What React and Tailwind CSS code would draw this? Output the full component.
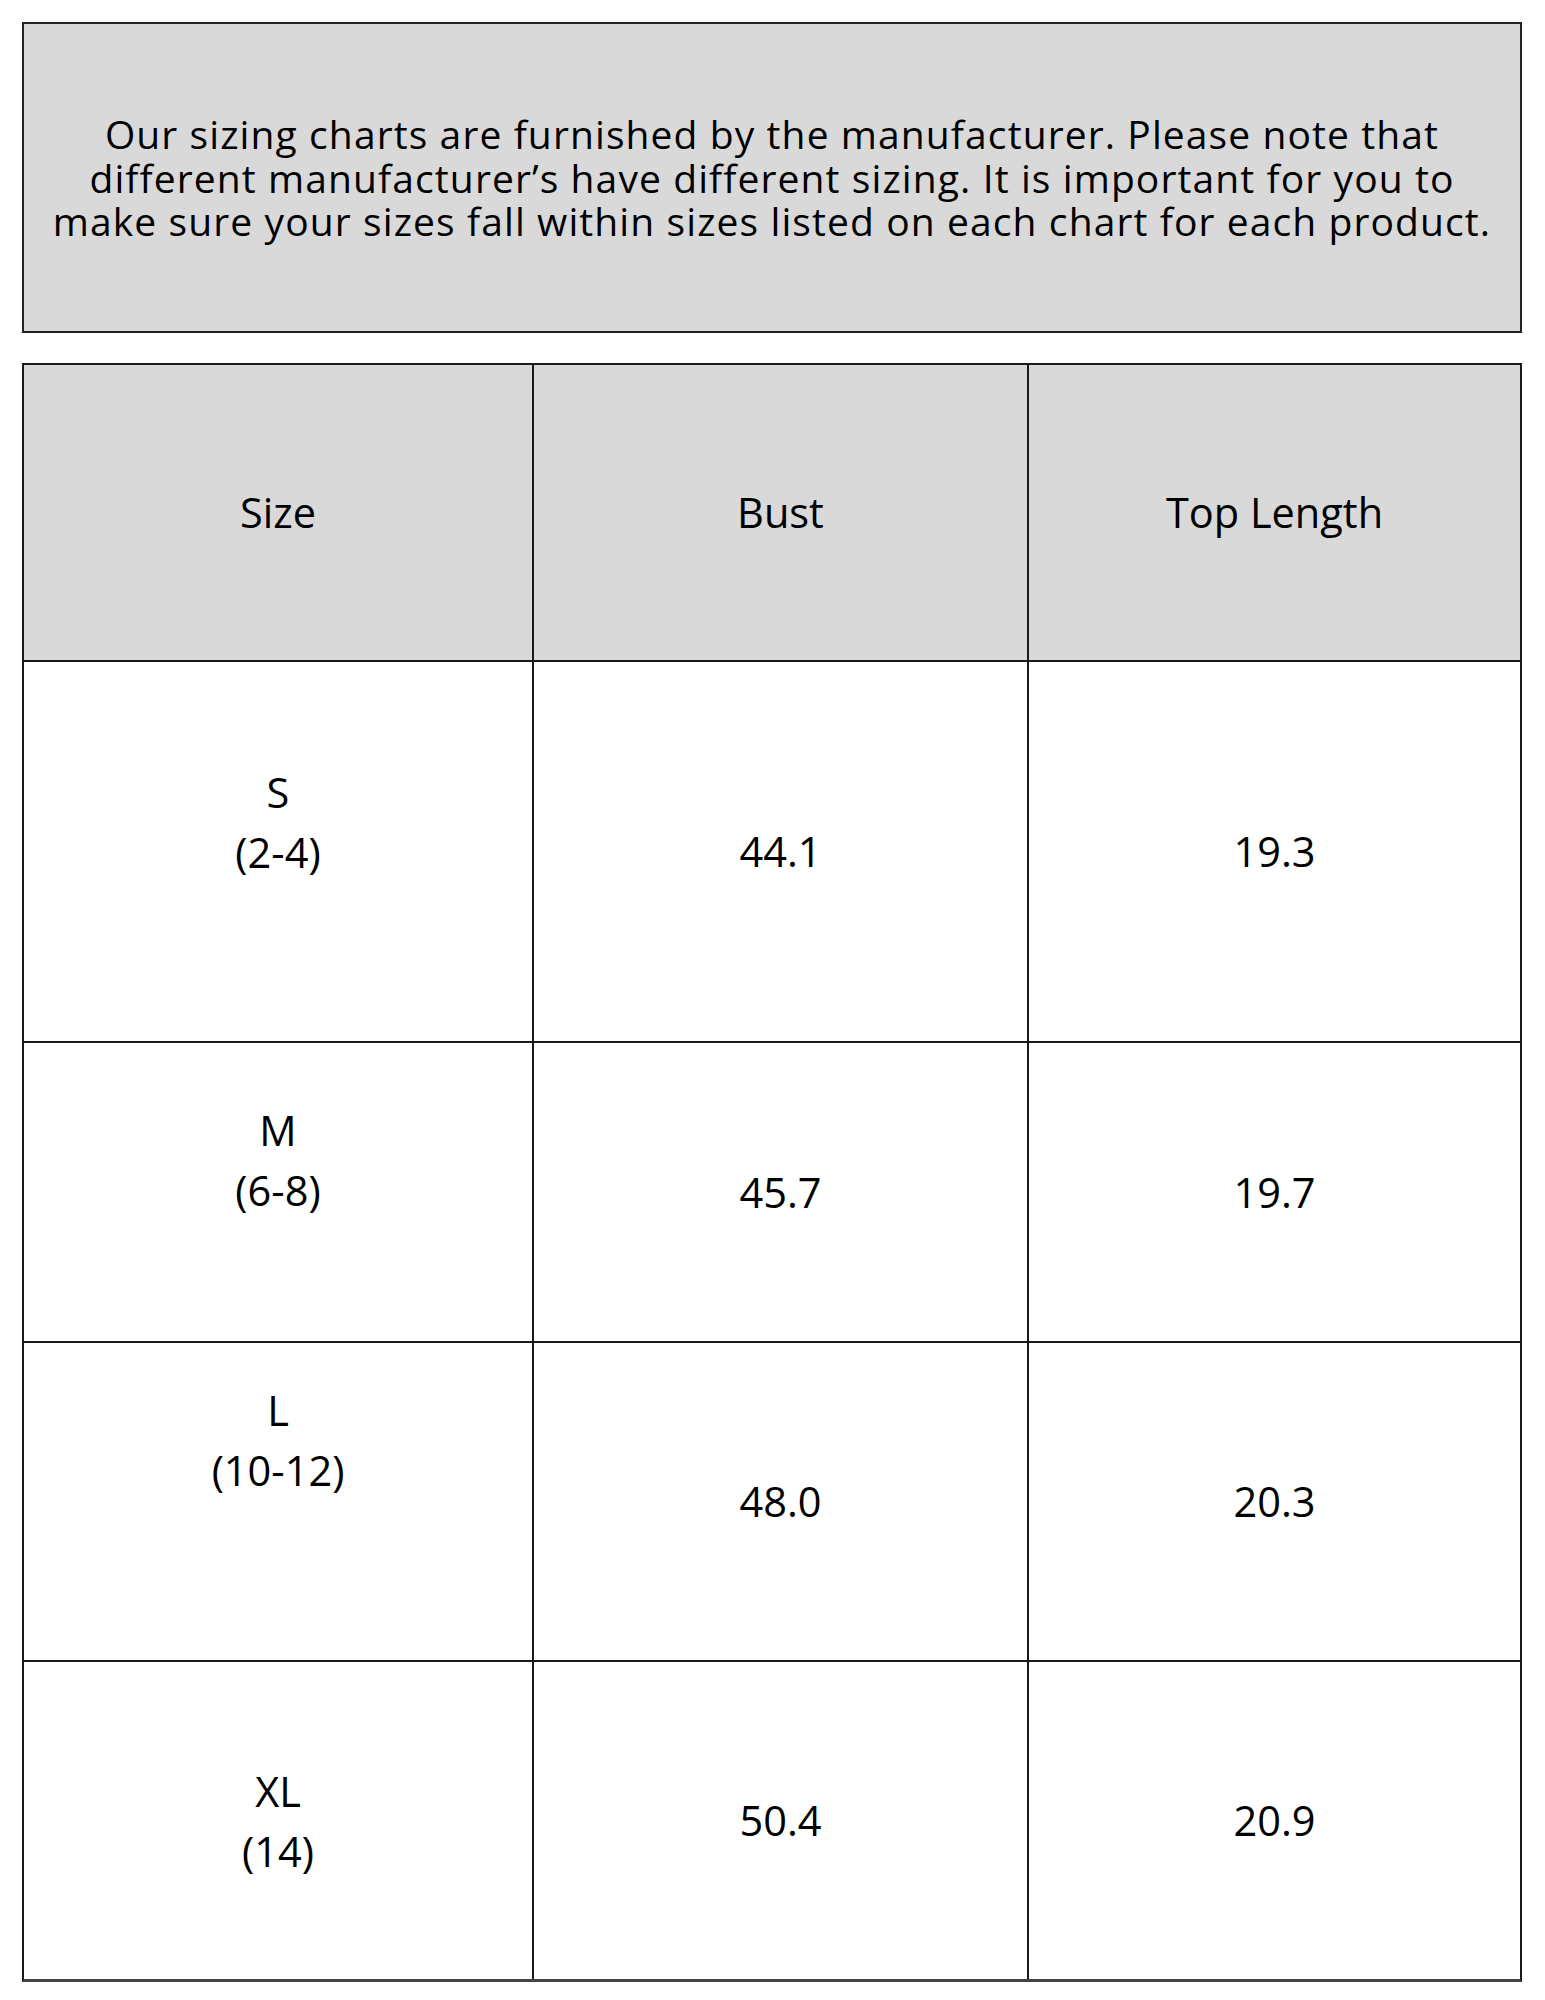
export default function App() {
  const note = [
    'Our sizing charts are furnished by the manufacturer. Please note that',
    'different manufacturer’s have different sizing. It is important for you to',
    'make sure your sizes fall within sizes listed on each chart for each product.',
  ];

  const rows = [
    { size: 'S', range: '(2-4)', bust: '44.1', length: '19.3', h: 'h-[381px]', pb: 'pb-[59px]' },
    { size: 'M', range: '(6-8)', bust: '45.7', length: '19.7', h: 'h-[300px]', pb: 'pb-[65px]' },
    { size: 'L', range: '(10-12)', bust: '48.0', length: '20.3', h: 'h-[319px]', pb: 'pb-[124px]' },
    { size: 'XL', range: '(14)', bust: '50.4', length: '20.9', h: 'h-[317px]', pb: 'pb-0' },
  ];

  return (
    <div className="w-[1545px] h-[2000px] bg-white pt-[22px] pl-[22px] text-black">
      {/* note box */}
      <div className="w-[1500px] h-[311px] bg-[#d9d9d9] border-2 border-[#222] flex flex-col items-center justify-center font-['Open_Sans',sans-serif] text-[39px] tracking-[1.1px]">
        {note.map(line => (
          <div key={line} className="h-[43.4px] leading-[43.4px] whitespace-nowrap">
            {line}
          </div>
        ))}
      </div>

      {/* chart */}
      <div className="mt-[30px] w-[1500px] border-2 border-[#1a1a1a] border-b-[3px] border-b-[#444] font-['Open_Sans',sans-serif] text-[41.5px]">
        <div className="grid grid-cols-[510px_495px_1fr] h-[297px] bg-[#d9d9d9] border-b-2 border-[#1a1a1a]">
          <div className="flex items-center justify-center border-r-2 border-[#1a1a1a]">Size</div>
          <div className="flex items-center justify-center border-r-2 border-[#1a1a1a]">Bust</div>
          <div className="flex items-center justify-center">Top Length</div>
        </div>
        {rows.map((r, i) => (
          <div
            key={r.size}
            className={`grid grid-cols-[510px_495px_1fr] ${r.h} ${i < rows.length - 1 ? 'border-b-2 border-[#1a1a1a]' : ''}`}
          >
            <div className={`flex flex-col items-center justify-center border-r-2 border-[#1a1a1a] leading-[60px] ${r.pb}`}>
              <span>{r.size}</span>
              <span>{r.range}</span>
            </div>
            <div className="flex items-center justify-center border-r-2 border-[#1a1a1a]">{r.bust}</div>
            <div className="flex items-center justify-center">{r.length}</div>
          </div>
        ))}
      </div>
    </div>
  );
}
